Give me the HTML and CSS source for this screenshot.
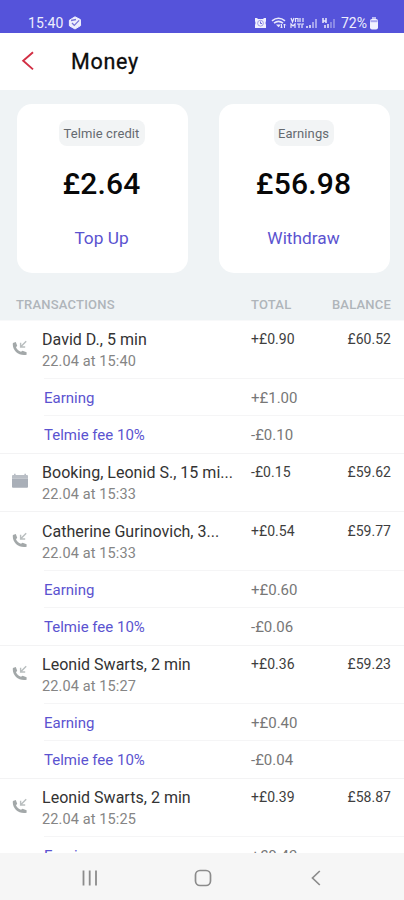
FILE: index.html
```
<!DOCTYPE html>
<html lang="en">
<head>
<meta charset="utf-8">
<title>Money</title>
<link rel="stylesheet" href="styles.css">
</head>
<body>
<svg class="defs" width="0" height="0">
  <symbol id="call" viewBox="0 0 16 18">
    <path d="M.9 4 3.8 3 5.2 6.8 4 8.3C4.9 10.3 6.6 11.9 9 12.8L10.5 11.7 14.6 13.2V15.8C6.5 17.4-.2 11 .9 4Z" fill="#a3a8a9"/>
    <path d="M14.2 2.2 9 7.6M8.6 3.8V8H13.2" fill="none" stroke="#b9bebf" stroke-width="1.4"/>
  </symbol>
</svg>
<div class="phone">
  <div class="status">
    <span class="time">15:40</span>
    <svg class="badge" viewBox="0 0 14 14"><path d="M7 .8 12.4 3.6 12.6 9.6 7 13 1.4 9.8 1.4 4.2Z" fill="#eeeefd" stroke="#eeeefd" stroke-linejoin="round"/><path d="m4 7 2.3 2.4 4.8-5M3 4.5l5-1" fill="none" stroke="#7773d8" stroke-width="1.3"/></svg>
    <svg class="tray" viewBox="0 0 82 16" fill="none" stroke="#e9e9fc">
      <path d="M1 3h2l1 1h5l1-1h2v3l-.5 2 .5 2v3H1v-3l.5-2L1 6Z" fill="#f0f0fe" stroke="none"/>
      <circle cx="6.5" cy="8.2" r="2.9" stroke="#8b88e2" stroke-width=".8"/><path d="M6.5 6.5v2H8" stroke="#6a67d8"/>
      <path d="M18 5.8q6.5-5 13 0M20 8.2q4.5-3.6 9 0" stroke-width="1.6"/><path d="m22 9.5 2.5 2.7L27 9.5Z" fill="#e9e9fc" stroke="none"/>
      <path d="M27.5 9v4m-1.2-1.3 1.2 1.3 1.2-1.3M30.5 13V9m-1.2 1.3L30.5 9l1.2 1.3"/>
      <path d="m37 3 1.5 4L40 3m1.5 0v4m0-3.5H44V7m2-4v4M49 3v4m-12 6V9l2 2 2-2v4m2-4h4m-2 0v4m3 0V9h2" stroke-width="1.2"/>
      <path d="M53 13v-2M56 13v-3" stroke-width="1.6"/><path d="M59 13V7M62 13V4" stroke-width="1.6" stroke="#b8b7f0"/>
      <path d="M69 3v5m0-2h3M72 3v5M71 13v-3M74 13v-4" stroke-width="1.5"/><path d="M77 13V7M80 13V4" stroke-width="1.5" stroke="#9c9aea"/>
    </svg>
    <span class="charge">72%</span>
    <svg class="battery" viewBox="0 0 10 14"><rect x="3" y="1" width="4" height="3" fill="#bbbaf2"/><rect x="1" y="3" width="8" height="10.5" rx="2" fill="#f2f2ff"/><path d="M1.5 5.2h7" stroke="#aaa8ee" stroke-width="2"/></svg>
  </div>
  <header class="bar">
    <svg class="back" viewBox="0 0 14 22"><path d="M12 2.2 2.2 10.8 12 19.4" fill="none" stroke="#d22f44" stroke-width="1.9"/></svg>
    <h1>Money</h1>
  </header>
  <section class="cards">
    <div class="card"><span class="chip">Telmie credit</span><strong>£2.64</strong><a>Top Up</a></div>
    <div class="card"><span class="chip earn">Earnings</span><strong>£56.98</strong><a>Withdraw</a></div>
  </section>
  <div class="heads"><span>TRANSACTIONS</span><span class="ht">TOTAL</span><span class="hb">BALANCE</span></div>
  <main class="list">
    <div class="row"><svg class="ico"><use href="#call"/></svg><div class="who"><p>David D., 5 min</p><small>22.04 at 15:40</small></div><b>+£0.90</b><i>£60.52</i></div>
    <div class="sub"><span>Earning</span><em>+£1.00</em></div>
    <div class="sub last"><span>Telmie fee 10%</span><em>-£0.10</em></div>
    <div class="row"><svg class="ico" viewBox="0 0 16 18"><path d="M0 6.5V4q0-1 1-1h1V1.8h1.6V3h8.8V1.8H14V3h1q1 0 1 1v2.5Z" fill="#b9bec5"/><path d="M0 6.5h16v8.3q0 1-1 1H1q-1 0-1-1Z" fill="#a9afb8"/></svg><div class="who"><p>Booking, Leonid S., 15 mi...</p><small>22.04 at 15:33</small></div><b>-£0.15</b><i>£59.62</i></div>
    <div class="row next"><svg class="ico"><use href="#call"/></svg><div class="who"><p>Catherine Gurinovich, 3...</p><small>22.04 at 15:33</small></div><b>+£0.54</b><i>£59.77</i></div>
    <div class="sub"><span>Earning</span><em>+£0.60</em></div>
    <div class="sub last"><span>Telmie fee 10%</span><em>-£0.06</em></div>
    <div class="row"><svg class="ico"><use href="#call"/></svg><div class="who"><p>Leonid Swarts, 2 min</p><small>22.04 at 15:27</small></div><b>+£0.36</b><i>£59.23</i></div>
    <div class="sub"><span>Earning</span><em>+£0.40</em></div>
    <div class="sub last"><span>Telmie fee 10%</span><em>-£0.04</em></div>
    <div class="row"><svg class="ico"><use href="#call"/></svg><div class="who"><p>Leonid Swarts, 2 min</p><small>22.04 at 15:25</small></div><b>+£0.39</b><i>£58.87</i></div>
    <div class="sub"><span>Earning</span><em>+£0.43</em></div>
  </main>
  <nav class="nav">
    <svg viewBox="0 0 18 18"><path d="M2.5 1.5v15M8.7 1.5v15M15 1.5v15" stroke="#8c8c8c" stroke-width="1.8"/></svg>
    <svg viewBox="0 0 18 18"><rect x="1.5" y="1.5" width="15" height="15" rx="4.5" fill="none" stroke="#8c8c8c" stroke-width="1.7"/></svg>
    <svg viewBox="0 0 18 18"><path d="M12.8 2 5.5 9l7.3 7" fill="none" stroke="#8c8c8c" stroke-width="1.7"/></svg>
  </nav>
</div>
</body>
</html>
```
FILE: styles.css
```
* { box-sizing: border-box; margin: 0; padding: 0; }
body { font-family: Roboto, "Liberation Sans", sans-serif; background: #fff; }
.defs { display: block; position: absolute; }
.phone { width: 404px; height: 900px; display: flex; flex-direction: column; overflow: hidden; }
.status { flex: none; height: 33px; background: #5553da; display: flex; align-items: center; padding: 12px 25px 0 28px; color: #eeeefd; font-size: 14px; }
.time { letter-spacing: .1px; }
.badge { width: 14px; height: 14px; margin-left: 5px; }
.tray { width: 82px; height: 16px; margin-left: auto; }
.charge { margin-left: 5px; width: 28px; white-space: nowrap; }
.battery { width: 10px; height: 14px; }
.bar { flex: none; height: 57px; display: flex; align-items: center; padding: 0 0 1px 21px; }
.back { width: 14px; height: 22px; margin-right: 36px; }
h1 { font-size: 21.5px; font-weight: 400; line-height: 26px; letter-spacing: .7px; color: #0c0c0c; -webkit-text-stroke: .3px #0c0c0c; padding-top: 2px; }
.cards { flex: none; height: 200px; background: #eff3f5; display: flex; gap: 31px; padding: 14px 14px 0 17px; }
.card { width: 171px; height: 169px; background: #fff; border-radius: 15px; display: flex; flex-direction: column; align-items: center; padding: 16px 2px 0 0; }
.chip { height: 26px; line-height: 27px; width: 86px; text-align: center; background: #f2f4f5; border-radius: 8px; font-size: 13px; letter-spacing: .1px; color: #656a70; white-space: nowrap; }
.earn { width: 60px; }
.card strong { font-size: 30px; line-height: 36px; margin-top: 20px; font-weight: 500; letter-spacing: .2px; color: #080808; white-space: nowrap; }
.card a { margin-top: 25px; font-size: 17.3px; line-height: 22px; color: #5b53d0; }
.heads { flex: none; height: 30px; background: #eff3f5; display: flex; padding: 5px 13px 0 16px; font-size: 13px; line-height: 20px; font-weight: 500; letter-spacing: .2px; color: #afb5ba; }
.ht { margin-left: auto; width: 80px; }
.hb { width: 60px; text-align: right; }
.list { flex: 1; min-height: 0; overflow: hidden; }
.row { height: 58px; display: flex; padding: 8px 13px 0 12px; border-top: 1px solid #f3f3f4; }
.row.next { height: 59px; padding-top: 9px; }
.row:first-child { border-top-color: #f8f9fa; }
.ico { flex: none; width: 16px; height: 18px; margin: 10px 14px 0 0; }
.who { width: 209px; white-space: nowrap; }
.who p { font-size: 16px; line-height: 21px; letter-spacing: .02px; color: #333; }
.who small { display: block; font-size: 14.5px; line-height: 24px; letter-spacing: .12px; color: #858585; }
.row b, .row i { font-style: normal; font-weight: 400; font-size: 14px; line-height: 20px; letter-spacing: .04px; color: #3e3e3e; white-space: nowrap; }
.row i { margin-left: auto; }
.sub { height: 37px; margin-left: 44px; display: flex; align-items: center; border-top: 1px solid #f5f5f6; font-size: 15px; padding-top: 1px; color: #5b53d0; }
.sub.last { height: 38px; padding-top: 0; }
.sub span { width: 207px; }
.sub em { font-style: normal; color: #777; }
.nav { flex: none; height: 47px; background: #f6f6f6; display: flex; gap: 95px; padding: 16px 0 0 81px; }
.nav svg { width: 18px; height: 18px; }
```
